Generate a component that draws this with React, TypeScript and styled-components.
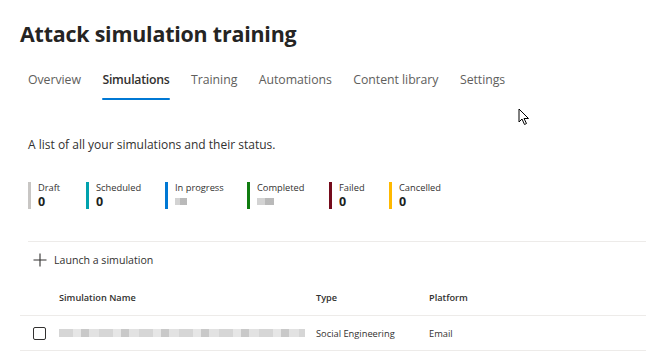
import React from "react";
import styled, { createGlobalStyle } from "styled-components";

const Global = createGlobalStyle`
  html, body { margin: 0; padding: 0; background: #ffffff; }
  body { font-family: "Open Sans", "Noto Sans", "Liberation Sans", sans-serif; color: #323130; }
  * { box-sizing: border-box; }
`;

const Page = styled.div`
  position: relative;
  width: 646px;
  height: 351px;
  overflow: hidden;
  padding: 20px 0 0 20px;
`;

const Title = styled.h1`
  margin: 0;
  font-size: 21.4px;
  line-height: 28px;
  font-weight: 700;
  letter-spacing: -0.2px;
  color: #252423;
`;

const Tabs = styled.nav`
  display: flex;
  gap: 21.5px;
  padding-left: 8px;
  margin-top: 22px;
`;

const Tab = styled.div<{ $active?: boolean }>`
  position: relative;
  font-size: 12.3px;
  line-height: 20px;
  padding-bottom: 10px;
  color: ${(p) => (p.$active ? "#323130" : "#605e5c")};
  font-weight: ${(p) => (p.$active ? 600 : 400)};
  letter-spacing: ${(p) => (p.$active ? "-0.25px" : "-0.05px")};
  &::after {
    content: "";
    display: ${(p) => (p.$active ? "block" : "none")};
    position: absolute;
    left: 0;
    right: 0;
    bottom: 0;
    height: 2px;
    background: #0078d4;
    border-radius: 1px;
  }
`;

const Content = styled.div`
  padding-left: 8px;
`;

const Description = styled.p`
  margin: 37px 0 0 0;
  font-size: 12px;
  line-height: 16px;
  color: #323130;
`;

const Stats = styled.div`
  display: flex;
  margin-top: 29px;
`;

const Stat = styled.div<{ $color: string; $width: number }>`
  display: flex;
  flex-direction: column;
  width: ${(p) => p.$width}px;
  height: 27px;
  padding-left: 7px;
  border-left: 3px solid ${(p) => p.$color};
`;

const StatLabel = styled.span`
  font-size: 9.3px;
  line-height: 11px;
  color: #323130;
`;

const StatValue = styled.span`
  font-size: 12.5px;
  font-weight: 700;
  line-height: 14px;
  margin-top: 2px;
  color: #201f1e;
`;

const Blurred = styled.span<{ $w: number }>`
  display: inline-block;
  width: ${(p) => p.$w}px;
  height: 7px;
  margin-top: 5px;
  background: linear-gradient(90deg, #c8c8c8 0 45%, #a8a8a8 45% 100%);
  opacity: 0.8;
`;

const Divider = styled.div`
  height: 1px;
  background: #edebe9;
  margin-top: 32px;
`;

const Command = styled.div`
  display: flex;
  align-items: center;
  gap: 7px;
  height: 35px;
  padding-left: 5px;
  font-size: 10.6px;
  color: #323130;
`;

const Table = styled.div`
  margin-top: 2px;
`;

const Row = styled.div<{ $header?: boolean }>`
  display: grid;
  grid-template-columns: 39px 257px 113px 1fr;
  align-items: center;
  height: ${(p) => (p.$header ? "37px" : "35px")};
  border-bottom: 1px solid #edebe9;
  font-size: ${(p) => (p.$header ? "9.2px" : "9.3px")};
  font-weight: ${(p) => (p.$header ? 600 : 400)};
  color: #323130;
`;

const Checkbox = styled.span`
  width: 13px;
  height: 13px;
  margin-left: 13px;
  border: 1px solid #323130;
  border-radius: 2px;
`;

const NameBlur = styled.span`
  display: block;
  width: 246px;
  height: 8px;
  background: repeating-linear-gradient(
    90deg,
    #d6d6d6 0 14px,
    #e6e6e6 14px 22px,
    #c9c9c9 22px 30px,
    #e2e2e2 30px 40px
  );
`;

const Cursor = styled.svg`
  position: absolute;
  left: 518px;
  top: 108px;
`;

const stats = [
  { label: "Draft", color: "#c8c6c4", width: 58, value: "0" },
  { label: "Scheduled", color: "#00a2ad", width: 79, value: "0" },
  { label: "In progress", color: "#0078d4", width: 82, blur: 12 },
  { label: "Completed", color: "#107c10", width: 82, blur: 17 },
  { label: "Failed", color: "#750b1c", width: 60, value: "0" },
  { label: "Cancelled", color: "#ffb900", width: 80, value: "0" },
];

export default function App() {
  return (
    <>
      <Global />
      <Page>
        <Title>Attack simulation training</Title>
        <Tabs>
          <Tab>Overview</Tab>
          <Tab $active>Simulations</Tab>
          <Tab>Training</Tab>
          <Tab>Automations</Tab>
          <Tab>Content library</Tab>
          <Tab>Settings</Tab>
        </Tabs>
        <Content>
          <Description>A list of all your simulations and their status.</Description>
          <Stats>
            {stats.map((s) => (
              <Stat key={s.label} $color={s.color} $width={s.width}>
                <StatLabel>{s.label}</StatLabel>
                {s.blur ? <Blurred $w={s.blur} /> : <StatValue>{s.value}</StatValue>}
              </Stat>
            ))}
          </Stats>
          <Divider />
          <Command>
            <svg width="14" height="14" viewBox="0 0 14 14">
              <path d="M7 0.5V13.5M0.5 7H13.5" stroke="#323130" strokeWidth="1.1" />
            </svg>
            Launch a simulation
          </Command>
        </Content>
        <Table>
          <Row $header>
            <span />
            <span>Simulation Name</span>
            <span>Type</span>
            <span>Platform</span>
          </Row>
          <Row>
            <Checkbox />
            <NameBlur />
            <span>Social Engineering</span>
            <span>Email</span>
          </Row>
        </Table>
        <Cursor width="12" height="18" viewBox="0 0 12 18">
          <path
            d="M1 1 L1 14 L4 11 L6.5 16.5 L8.5 15.5 L6 10.5 L10.5 10.5 Z"
            fill="#ffffff"
            stroke="#000000"
            strokeWidth="1"
            strokeLinejoin="round"
          />
        </Cursor>
      </Page>
    </>
  );
}
